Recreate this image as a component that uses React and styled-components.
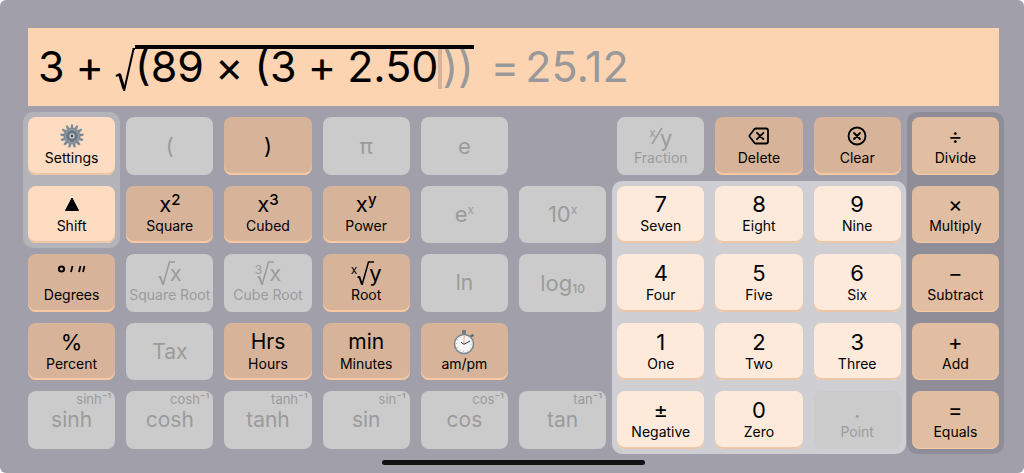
import React from "react";
import styled, { createGlobalStyle, css } from "styled-components";

const GlobalStyle = createGlobalStyle`
  *, *::before, *::after { box-sizing: border-box; }
  body {
    margin: 0;
    background: #ffffff;
    font-family: Inter, "Liberation Sans", sans-serif;
    color: #000000;
  }
`;

const Screen = styled.main`
  display: flex;
  flex-direction: column;
  gap: 11px;
  min-height: 100vh;
  padding: 28px 25px 8px 28px;
  border-radius: 6px;
  background: #a19fa9;
`;

const Display = styled.output`
  display: flex;
  align-items: center;
  gap: 11px;
  height: 78px;
  padding: 0 10px 2px;
  background: #fdd4b2;
  font-size: 43px;
  line-height: 48px;
  white-space: nowrap;
`;

const Root = styled.span`
  display: flex;
  align-items: center;
`;

const Radical = styled.svg`
  width: 20px;
  height: 50px;
  flex: none;
`;

const Radicand = styled.span`
  display: flex;
  align-items: center;
  gap: 11px;
  border-top: 4px solid #000000;
  margin-bottom: 4px;
  line-height: 34px;
`;

const Entry = styled.span`
  display: flex;
  align-items: center;
`;

const Caret = styled.span`
  align-self: flex-start;
  width: 4px;
  height: 40px;
  margin-bottom: -6px;
  background: #d7b499;
`;

const Pending = styled.span`
  color: #999999;
`;

const Result = styled.span`
  display: flex;
  gap: 6px;
  margin-left: 6px;
  color: #999999;
`;

const Keypad = styled.div`
  flex: 1;
  display: grid;
  grid-template-columns: repeat(10, minmax(0, 1fr));
  grid-template-rows: repeat(5, minmax(56px, 1fr));
  gap: 11px;
`;

const panelTones = { shift: "#b4b3ba", digits: "#cfced3", operators: "#8f8d97" };

const Panel = styled.div`
  grid-column: ${(p) => p.$cols};
  grid-row: ${(p) => p.$rows};
  display: grid;
  grid-template-columns: subgrid;
  grid-template-rows: subgrid;
  margin: -5px;
  padding: 5px;
  border-radius: 10px;
  background: ${(p) => panelTones[p.$tone]};
`;

const keyTones = {
  tan: css`background: #d7b499; box-shadow: inset 0 -2px 0 #f8c9a2;`,
  peach: css`background: #fddcc2; box-shadow: inset 0 -2px 0 #ecc6a6;`,
  digit: css`background: #fdeadb; box-shadow: inset 0 -2px 0 #ecc6a6;`,
  operator: css`background: #e1bea1; box-shadow: inset 0 -1px 0 #f5caa6;`,
  off: css`background: #cbcbcb; color: #9b9b9b;`,
};

const KeyButton = styled.button`
  grid-column: ${(p) => p.$col};
  grid-row: ${(p) => p.$row};
  position: relative;
  display: flex;
  flex-direction: column;
  align-items: center;
  justify-content: center;
  min-width: 0;
  padding: 0;
  border: 0;
  border-radius: 8px;
  font-family: inherit;
  color: #000000;
  ${(p) => keyTones[p.$tone]}
`;

const Face = styled.span`
  display: flex;
  align-items: center;
  justify-content: center;
  height: 24px;
  font-size: ${(p) => (p.$word ? 21 : 22)}px;
  line-height: 24px;
  white-space: nowrap;
`;

const Caption = styled.span`
  font-size: 14px;
  line-height: 20px;
  white-space: nowrap;
`;

const Raised = styled.span`
  align-self: flex-start;
  font-size: ${(p) => (p.$strong ? 15 : 12)}px;
  font-weight: ${(p) => (p.$strong ? 500 : 400)};
  line-height: 16px;
`;

const Lowered = styled.span`
  align-self: flex-end;
  font-size: 12px;
  font-weight: 500;
  line-height: 12px;
`;

const Inverse = styled.span`
  position: absolute;
  top: 0;
  right: 4px;
  font-size: 13px;
  line-height: 16px;
`;

const Icon = styled.svg`
  width: 24px;
  height: 24px;
  flex: none;
  overflow: visible;
`;

const HomeBar = styled.div`
  align-self: center;
  width: 27%;
  height: 5px;
  border-radius: 3px;
  background: #111111;
`;

const GearIcon = () => (
  <Icon viewBox="0 0 24 24" aria-hidden="true">
    {Array.from({ length: 13 }, (_, i) => (
      <path key={i} d="M10.400 4.500 L11.100 0.200 H12.900 L13.600 4.500 Z" fill="#7d8a95" transform={`rotate(${(i * 360) / 13} 12 12)`} />
    ))}
    <circle cx="12" cy="12" r="7.500" fill="#9aa6af" stroke="#7f8c97" strokeWidth="1.600" />
    <circle cx="12" cy="12" r="5.200" fill="#5f6b76" stroke="#6f7c87" strokeWidth="1.500" />
    <circle cx="12" cy="12" r="3" fill="#d3dae0" stroke="#8a969f" />
    <circle cx="12" cy="12" r="1.400" fill="#414a52" />
  </Icon>
);

const ShiftIcon = () => (
  <Icon viewBox="0 0 24 24" aria-hidden="true">
    <path d="M12 6 L18.500 18.500 H5.500 Z" stroke="#000" strokeLinejoin="round" />
  </Icon>
);

const DeleteIcon = () => (
  <Icon viewBox="0 0 24 24" fill="none" stroke="currentColor" strokeWidth="1.800" strokeLinecap="round" strokeLinejoin="round" aria-hidden="true">
    <path d="M9 4.500 H19 Q21 4.500 21 6.500 V17.500 Q21 19.500 19 19.500 H9 Q8 19.500 7.400 18.800 L2.800 13 Q2.200 12 2.800 11 L7.400 5.200 Q8 4.500 9 4.500 Z" />
    <path d="M10 8.800 L16.400 15.200 M16.400 8.800 L10 15.200" />
  </Icon>
);

const ClearIcon = () => (
  <Icon viewBox="0 0 24 24" fill="none" stroke="currentColor" strokeWidth="1.800" strokeLinecap="round" aria-hidden="true">
    <circle cx="12" cy="12" r="8.500" />
    <path d="M9 9 L15 15 M15 9 L9 15" />
  </Icon>
);

const StopwatchIcon = () => (
  <Icon viewBox="0 0 24 24" aria-hidden="true">
    <rect x="10" y="0" width="4" height="4" rx="1" fill="#6d7883" />
    <path d="M18.500 6.500 L21.500 5" stroke="#56616b" strokeWidth="2.200" />
    <circle cx="12" cy="14" r="9.500" fill="#f6f6f6" stroke="#7d8790" strokeWidth="1.600" />
    <circle cx="12" cy="14" r="7.400" fill="none" stroke="#a2a5a8" strokeWidth="1.200" strokeDasharray="0.600 3.275" />
    <path d="M12 6.500 V14" stroke="#f2a392" />
    <path d="M9 12.300 L12 14.300 L18 11" fill="none" stroke="#333333" />
  </Icon>
);

const RootIcon = styled(Icon)`
  width: 16px;
  margin-right: -4px;
`;

const RootSign = () => (
  <RootIcon viewBox="0 0 16 24" fill="none" stroke="currentColor" aria-hidden="true">
    <path d="M0.500 16.500 L2.500 15.500" strokeWidth="1.400" />
    <path d="M2.200 15.500 L5 23.500" strokeWidth="2" />
    <path d="M5 24 L11.500 1 H17" strokeWidth="1.500" />
  </RootIcon>
);

const Index = styled.span`
  align-self: flex-start;
  margin-right: ${(p) => (p.$tuck ? -5 : 0)}px;
  font-size: 12px;
  line-height: 18px;
`;

const RootFace = ({ index, of }) => (
  <>
    {index && <Index $tuck={index === "3"}>{index}</Index>}
    <RootSign />
    {of}
  </>
);

const PowerFace = ({ base, exp, strong }) => (
  <>
    {base}
    <Raised $strong={strong}>{exp}</Raised>
  </>
);

const DegreesIcon = () => (
  <Icon viewBox="0 0 24 24" fill="none" stroke="currentColor" strokeWidth="2" aria-hidden="true">
    <circle cx="1.500" cy="8" r="2.600" />
    <path d="M12.500 5 L11 11 M20.500 5 L19 11 M24.500 5 L23 11" strokeWidth="1.800" />
  </Icon>
);

const SlashIcon = styled(Icon)`
  width: 8px;
  margin: 0 -1px 0 -3px;
`;

const Denominator = styled.span`
  align-self: flex-end;
  line-height: 20px;
`;

const FractionFace = () => (
  <>
    <Index>x</Index>
    <SlashIcon viewBox="0 0 8 24" fill="none" stroke="currentColor" strokeWidth="1.500" aria-hidden="true">
      <path d="M-1 20 L9 4" />
    </SlashIcon>
    <Denominator>y</Denominator>
  </>
);

const Key = ({ col, row, tone = "off", face, caption, inverse }) => (
  <KeyButton type="button" $col={col} $row={row} $tone={tone} disabled={tone === "off"}>
    {inverse && <Inverse>{inverse}</Inverse>}
    <Face $word={typeof face === "string" && face.length > 1}>{face}</Face>
    {caption && <Caption>{caption}</Caption>}
  </KeyButton>
);

const functionKeys = [
  { col: 2, row: 1, face: "(" },
  { col: 3, row: 1, tone: "tan", face: ")" },
  { col: 4, row: 1, face: "π" },
  { col: 5, row: 1, face: "e" },
  { col: 7, row: 1, face: <FractionFace />, caption: "Fraction" },
  { col: 8, row: 1, tone: "tan", face: <DeleteIcon />, caption: "Delete" },
  { col: 9, row: 1, tone: "tan", face: <ClearIcon />, caption: "Clear" },
  { col: 2, row: 2, tone: "tan", face: <PowerFace strong base="x" exp="2" />, caption: "Square" },
  { col: 3, row: 2, tone: "tan", face: <PowerFace strong base="x" exp="3" />, caption: "Cubed" },
  { col: 4, row: 2, tone: "tan", face: <PowerFace strong base="x" exp="y" />, caption: "Power" },
  { col: 5, row: 2, face: <PowerFace base="e" exp="x" /> },
  { col: 6, row: 2, face: <PowerFace base="10" exp="x" /> },
  { col: 1, row: 3, tone: "tan", face: <DegreesIcon />, caption: "Degrees" },
  { col: 2, row: 3, face: <RootFace of="x" />, caption: "Square Root" },
  { col: 3, row: 3, face: <RootFace index="3" of="x" />, caption: "Cube Root" },
  { col: 4, row: 3, tone: "tan", face: <RootFace index="x" of="y" />, caption: "Root" },
  { col: 5, row: 3, face: "ln" },
  { col: 6, row: 3, face: <>log<Lowered>10</Lowered></> },
  { col: 1, row: 4, tone: "tan", face: "%", caption: "Percent" },
  { col: 2, row: 4, face: "Tax" },
  { col: 3, row: 4, tone: "tan", face: "Hrs", caption: "Hours" },
  { col: 4, row: 4, tone: "tan", face: "min", caption: "Minutes" },
  { col: 5, row: 4, tone: "tan", face: <StopwatchIcon />, caption: "am/pm" },
  ...["sinh", "cosh", "tanh", "sin", "cos", "tan"].map((name, i) => ({
    col: i + 1,
    row: 5,
    face: name,
    inverse: name + "⁻¹",
  })),
];

const digitKeys = [
  ["7", "Seven"], ["8", "Eight"], ["9", "Nine"],
  ["4", "Four"], ["5", "Five"], ["6", "Six"],
  ["1", "One"], ["2", "Two"], ["3", "Three"],
  ["±", "Negative"], ["0", "Zero"], [".", "Point"],
];

const operatorKeys = [
  ["÷", "Divide"], ["×", "Multiply"], ["−", "Subtract"], ["+", "Add"], ["=", "Equals"],
];

export default function App() {
  return (
    <>
      <GlobalStyle />
      <Screen>
        <Display>
          <span>3</span>
          <span>+</span>
          <Root>
            <Radical viewBox="0 0 20 50" fill="none" stroke="#000" aria-hidden="true">
              <path d="M1 35 L5 33" strokeWidth="2" />
              <path d="M4.500 33 L9 48" strokeWidth="3" />
              <path d="M9 50 L18.500 8 H20" strokeWidth="2" />
            </Radical>
            <Radicand>
              <span>(89</span>
              <span>×</span>
              <span>(3</span>
              <span>+</span>
              <Entry>
                2.50
                <Caret />
                <Pending>))</Pending>
              </Entry>
            </Radicand>
          </Root>
          <Result>
            <span>=</span>
            <span>25.12</span>
          </Result>
        </Display>
        <Keypad>
          <Panel $cols="1" $rows="1 / 3" $tone="shift">
            <Key col={1} row={1} tone="peach" face={<GearIcon />} caption="Settings" />
            <Key col={1} row={2} tone="peach" face={<ShiftIcon />} caption="Shift" />
          </Panel>
          {functionKeys.map((k) => (
            <Key key={`${k.col}-${k.row}`} {...k} />
          ))}
          <Panel $cols="7 / 10" $rows="2 / 6" $tone="digits">
            {digitKeys.map(([face, caption]) => (
              <Key key={caption} col="auto" row="auto" tone={face === "." ? "off" : "digit"} face={face} caption={caption} />
            ))}
          </Panel>
          <Panel $cols="10" $rows="1 / 6" $tone="operators">
            {operatorKeys.map(([face, caption]) => (
              <Key key={caption} col="auto" row="auto" tone="operator" face={face} caption={caption} />
            ))}
          </Panel>
        </Keypad>
        <HomeBar />
      </Screen>
    </>
  );
}
